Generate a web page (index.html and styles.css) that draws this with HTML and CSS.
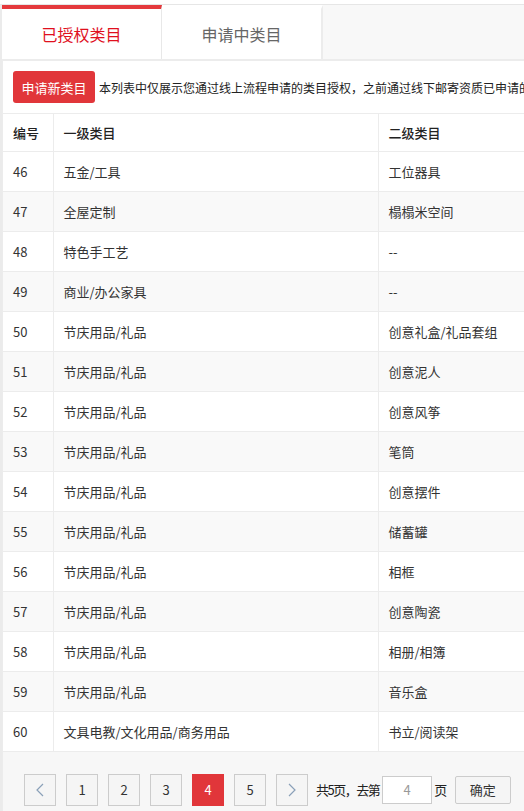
FILE: index.html
```html
<!DOCTYPE html>
<html>
<head>
  <title>类目管理</title>
  <meta charset="utf-8">
  <link rel="stylesheet" href="styles.css">
</head>
<body>
  <div class="page">
    <div class="tabs">
      <div class="tab active">已授权类目</div>
      <div class="tab">申请中类目</div>
    </div>

    <div class="panel">
      <div class="toolbar">
        <button class="btn-apply">申请新类目</button>
        <span class="tip">本列表中仅展示您通过线上流程申请的类目授权，之前通过线下邮寄资质已申请的类目不在此列表中展示</span>
      </div>

      <table class="cat-table">
        <thead>
          <tr>
            <th class="col-no">编号</th>
            <th class="col-first">一级类目</th>
            <th class="col-second">二级类目</th>
          </tr>
        </thead>
        <tbody>
          <tr><td>46</td><td>五金/工具</td><td>工位器具</td></tr>
          <tr><td>47</td><td>全屋定制</td><td>榻榻米空间</td></tr>
          <tr><td>48</td><td>特色手工艺</td><td>--</td></tr>
          <tr><td>49</td><td>商业/办公家具</td><td>--</td></tr>
          <tr><td>50</td><td>节庆用品/礼品</td><td>创意礼盒/礼品套组</td></tr>
          <tr><td>51</td><td>节庆用品/礼品</td><td>创意泥人</td></tr>
          <tr><td>52</td><td>节庆用品/礼品</td><td>创意风筝</td></tr>
          <tr><td>53</td><td>节庆用品/礼品</td><td>笔筒</td></tr>
          <tr><td>54</td><td>节庆用品/礼品</td><td>创意摆件</td></tr>
          <tr><td>55</td><td>节庆用品/礼品</td><td>储蓄罐</td></tr>
          <tr><td>56</td><td>节庆用品/礼品</td><td>相框</td></tr>
          <tr><td>57</td><td>节庆用品/礼品</td><td>创意陶瓷</td></tr>
          <tr><td>58</td><td>节庆用品/礼品</td><td>相册/相簿</td></tr>
          <tr><td>59</td><td>节庆用品/礼品</td><td>音乐盒</td></tr>
          <tr><td>60</td><td>文具电教/文化用品/商务用品</td><td>书立/阅读架</td></tr>
        </tbody>
      </table>

      <div class="pager">
        <a class="pg prev">
          <svg width="8" height="14" viewBox="0 0 8 14"><path d="M7 1 L1 7 L7 13" fill="none" stroke="#8aa0b8" stroke-width="1.2"/></svg>
        </a>
        <a class="pg">1</a>
        <a class="pg">2</a>
        <a class="pg">3</a>
        <a class="pg current">4</a>
        <a class="pg">5</a>
        <a class="pg next">
          <svg width="8" height="14" viewBox="0 0 8 14"><path d="M1 1 L7 7 L1 13" fill="none" stroke="#8aa0b8" stroke-width="1.2"/></svg>
        </a>
        <span class="pg-text">共5页，去第</span>
        <input class="pg-input" type="text" value="4">
        <span class="pg-text">页</span>
        <button class="pg-go">确定</button>
      </div>
    </div>
  </div>
</body>
</html>
```

FILE: styles.css
```css
* {
  margin: 0;
  padding: 0;
  box-sizing: border-box;
}

html, body {
  overflow: hidden;
}

body {
  font-family: "Noto Sans CJK SC", "Noto Sans", sans-serif;
  font-size: 13px;
  color: #333;
  background: #fff;
  padding-top: 4px;
}

.page {
  width: 900px;
  border-top: 1px solid #e6e6e6;
  border-left: 2px solid #ebebeb;
}

/* tabs */
.tabs {
  display: flex;
  height: 56px;
  background: #f8f8f8;
  border-bottom: 2px solid #ececec;
}

.tab {
  width: 160px;
  background: #fff;
  border-top: 4px solid transparent;
  border-right: 1px solid #e8e8e8;
  display: flex;
  align-items: center;
  justify-content: center;
  font-size: 16px;
  color: #666;
}

.tab.active {
  border-top-color: #e4393c;
  color: #e0101e;
}

.tab + .tab {
  width: 161px;
  border-right: 2px solid #ececec;
}

/* panel */
.panel {
  border-left: 1px solid #ececec;
  background: #fff;
}

.toolbar {
  display: flex;
  align-items: center;
  padding: 10px 0 10px 10px;
  height: 52px;
  white-space: nowrap;
}

.btn-apply {
  width: 82px;
  height: 32px;
  background: #e1363a;
  color: #fff;
  border: none;
  border-radius: 3px;
  font-family: inherit;
  font-size: 13px;
}

.tip {
  margin-left: 4px;
  font-size: 12px;
  color: #222;
}

/* table */
.cat-table {
  border-collapse: collapse;
  width: 700px;
  table-layout: fixed;
}

.cat-table th,
.cat-table td {
  height: 40px;
  padding: 0 10px;
  text-align: left;
  border-top: 1px solid #ececec;
  border-right: 1px solid #ececec;
  white-space: nowrap;
}

.cat-table th {
  height: 38px;
  font-weight: 500;
  color: #222;
}

.col-no { width: 50px; }
.col-first { width: 325px; }
.col-second { width: 325px; }

.cat-table tbody tr:nth-child(even) {
  background: #f9f9f9;
}

.cat-table tbody tr:last-child td {
  border-bottom: 1px solid #ececec;
}

/* pager */
.pager {
  display: flex;
  align-items: center;
  background: #f7f7f7;
  padding: 15px 0 20px 21px;
  height: 80px;
}

.pg {
  width: 32px;
  height: 32px;
  margin-right: 10px;
  border: 1px solid #ccc;
  background: #f5f5f5;
  display: flex;
  align-items: center;
  justify-content: center;
  font-size: 13px;
  color: #333;
}

.pg.current {
  background: #e1363a;
  border-color: #e1363a;
  color: #fff;
}

.pg.next {
  margin-right: 8px;
}

.pg-text {
  font-size: 13px;
  letter-spacing: -1.5px;
  color: #222;
}

.pg-input {
  width: 50px;
  height: 28px;
  margin: 0 2px 0 3px;
  border: 1px solid #ccc;
  background: #fff;
  text-align: center;
  font-family: inherit;
  font-size: 13px;
  color: #999;
}

.pg-go {
  width: 56px;
  height: 28px;
  margin-left: 9px;
  border: 1px solid #ccc;
  border-radius: 2px;
  background: #f5f5f5;
  font-family: inherit;
  font-size: 13px;
  color: #333;
}
```
